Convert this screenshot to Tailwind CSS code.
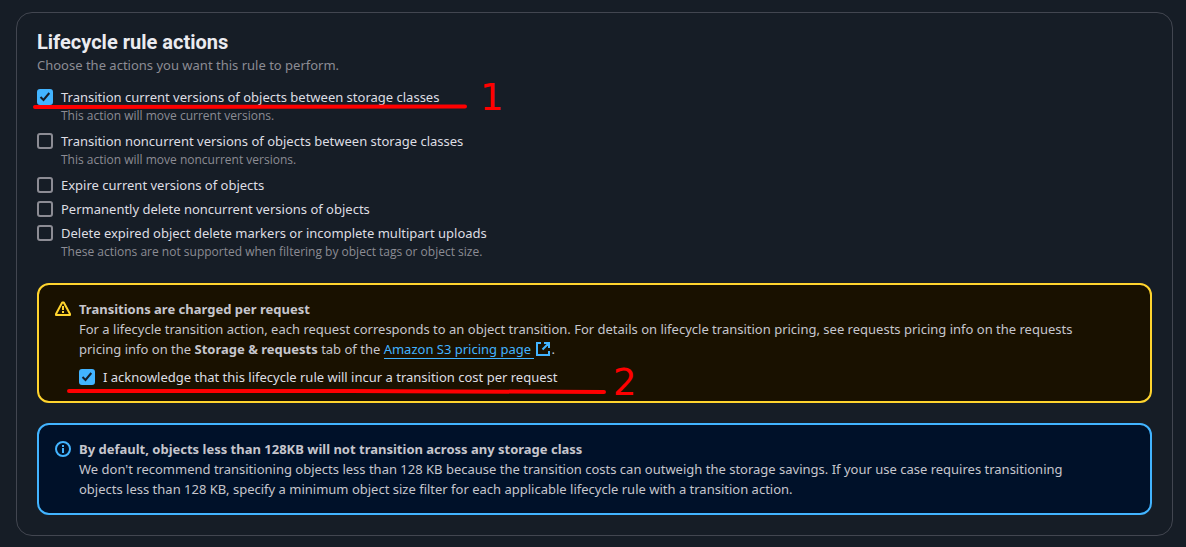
<!DOCTYPE html>
<html lang="en">
<head>
<meta charset="utf-8">
<meta name="viewport" content="width=device-width, initial-scale=1">
<title>Lifecycle rule actions</title>
<script src="https://cdn.jsdelivr.net/npm/@tailwindcss/browser@4"></script>
</head>
<body class="relative min-h-screen bg-[#161d26] px-4 pt-3 pr-[13px] pb-3 font-['Noto_Sans',sans-serif] text-[13px] leading-5 text-[#c6c6cd]">
<main class="rounded-2xl border border-[#424650] px-5 pt-[17px] pb-5">
  <header>
    <h2 class="font-['Roboto','Noto_Sans',sans-serif] text-[20px] leading-6 font-bold text-[#ebebf0]">Lifecycle rule actions</h2>
    <p class="mt-px text-[#8c8c94]">Choose the actions you want this rule to perform.</p>
  </header>

  <div class="mt-3 flex flex-col gap-1 text-[#dedee3]">
    <div class="flex gap-2">
      <span class="mt-0.5 grid size-4 shrink-0">
        <input id="a1" type="checkbox" checked aria-describedby="d1" class="col-start-1 row-start-1 size-4 appearance-none rounded-[3px] border-2 border-[#8c8c94] checked:border-[#42b4ff] checked:bg-[#42b4ff]">
        <svg class="pointer-events-none col-start-1 row-start-1 size-4" viewBox="0 0 16 16" fill="none" stroke="#161d26" stroke-width="2"><path d="M3.5 8 6.5 11 12.3 4"/></svg>
      </span>
      <div>
        <label for="a1" class="block">Transition current versions of objects between storage classes</label>
        <p id="d1" class="pb-0.5 font-['Open_Sans',sans-serif] text-xs leading-[18px] text-[#8c8c94]">This action will move current versions.</p>
      </div>
    </div>
    <div class="flex gap-2">
      <input id="a2" type="checkbox" aria-describedby="d2" class="mt-0.5 size-4 shrink-0 appearance-none rounded-[3px] border-2 border-[#8c8c94]">
      <div>
        <label for="a2" class="block">Transition noncurrent versions of objects between storage classes</label>
        <p id="d2" class="pb-0.5 font-['Open_Sans',sans-serif] text-xs leading-[18px] text-[#8c8c94]">This action will move noncurrent versions.</p>
      </div>
    </div>
    <div class="flex gap-2">
      <input id="a3" type="checkbox" class="mt-0.5 size-4 shrink-0 appearance-none rounded-[3px] border-2 border-[#8c8c94]">
      <label for="a3">Expire current versions of objects</label>
    </div>
    <div class="flex gap-2">
      <input id="a4" type="checkbox" class="mt-0.5 size-4 shrink-0 appearance-none rounded-[3px] border-2 border-[#8c8c94]">
      <label for="a4">Permanently delete noncurrent versions of objects</label>
    </div>
    <div class="flex gap-2">
      <input id="a5" type="checkbox" aria-describedby="d5" class="mt-0.5 size-4 shrink-0 appearance-none rounded-[3px] border-2 border-[#8c8c94]">
      <div>
        <label for="a5" class="block">Delete expired object delete markers or incomplete multipart uploads</label>
        <p id="d5" class="pb-0.5 font-['Open_Sans',sans-serif] text-xs leading-[18px] text-[#8c8c94]">These actions are not supported when filtering by object tags or object size.</p>
      </div>
    </div>
  </div>

  <section class="mt-5 flex gap-2 rounded-xl border-2 border-[#ffd42e] bg-[#191100] px-4 py-3.5">
    <svg class="mt-0.5 size-4 shrink-0" viewBox="0 0 16 16" fill="none" stroke="#ffd42e" stroke-width="2" stroke-linejoin="round"><path d="M7.2 1.5h1.6L15 13v1H1v-1L7.2 1.5ZM8 5v4M8 10v2"/></svg>
    <div class="flex-1">
      <h3 class="font-bold">Transitions are charged per request</h3>
      <p class="pr-7">For a lifecycle transition action, each request corresponds to an object transition. For details on lifecycle transition pricing, see requests pricing info on the requests pricing info on the <b>Storage &amp; requests</b> tab of the <a href="#" class="text-[#42b4ff]"><span class="border-b border-[#42b4ff] whitespace-pre">Amazon S3 pricing page </span><svg class="ml-px inline size-4 align-[-3px]" viewBox="0 0 16 16" fill="none" stroke="currentColor" stroke-width="2"><path d="M6 2H2v12h12V10M9 2h5v5M14 2 7.5 8.5"/></svg></a>.</p>
      <div class="mt-2 flex gap-2 text-[#dedee3]">
        <span class="mt-0.5 grid size-4 shrink-0">
          <input id="ack" type="checkbox" checked class="col-start-1 row-start-1 size-4 appearance-none rounded-[3px] border-2 border-[#8c8c94] checked:border-[#42b4ff] checked:bg-[#42b4ff]">
          <svg class="pointer-events-none col-start-1 row-start-1 size-4" viewBox="0 0 16 16" fill="none" stroke="#161d26" stroke-width="2"><path d="M3.5 8 6.5 11 12.3 4"/></svg>
        </span>
        <label for="ack">I acknowledge that this lifecycle rule will incur a transition cost per request</label>
      </div>
    </div>
  </section>

  <section class="mt-5 flex gap-2 rounded-xl border-2 border-[#42b4ff] bg-[#001129] px-4 py-3.5">
    <svg class="mt-0.5 size-4 shrink-0" viewBox="0 0 16 16" fill="none" stroke="#42b4ff" stroke-width="2"><circle cx="8" cy="8" r="7"/><path d="M8 4v2M8 7v5"/></svg>
    <div class="flex-1">
      <h3 class="font-bold">By default, objects less than 128KB will not transition across any storage class</h3>
      <p class="pr-7">We don't recommend transitioning objects less than 128 KB because the transition costs can outweigh the storage savings. If your use case requires transitioning objects less than 128 KB, specify a minimum object size filter for each applicable lifecycle rule with a transition action.</p>
    </div>
  </section>
</main>

<!-- Step markers drawn over the form -->
<svg class="pointer-events-none absolute top-0 left-0 h-[547px] w-[700px] font-['DejaVu_Sans',sans-serif]" viewBox="0 0 700 547" fill="#ff0000" font-size="37">
  <path d="M35 107 465 106.5M69 391 350 391 604 392" fill="none" stroke="#ff0000" stroke-width="4" stroke-linecap="round"/>
  <text x="480" y="110">1</text>
  <text x="613" y="395">2</text>
</svg>
</body>
</html>
